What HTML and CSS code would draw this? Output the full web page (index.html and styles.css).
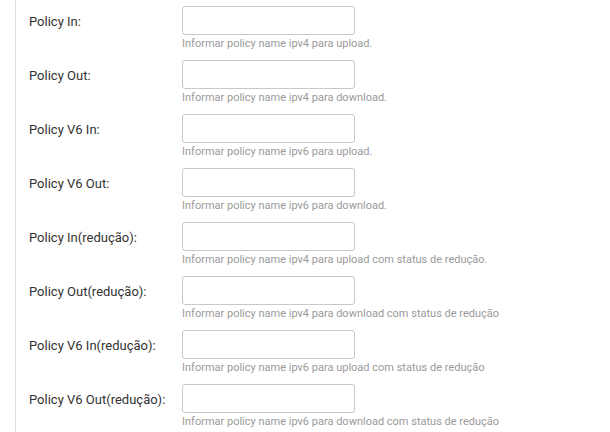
FILE: index.html
```html
<!DOCTYPE html>
<html lang="pt">
<head>
<meta charset="utf-8">
<title>Policies</title>
<link rel="stylesheet" href="styles.css">
</head>
<body>
<div class="panel">
  <div class="row">
    <label class="label">Policy In:</label>
    <div class="field">
      <input class="input" type="text">
      <div class="hint">Informar policy name ipv4 para upload.</div>
    </div>
  </div>
  <div class="row">
    <label class="label">Policy Out:</label>
    <div class="field">
      <input class="input" type="text">
      <div class="hint">Informar policy name ipv4 para download.</div>
    </div>
  </div>
  <div class="row">
    <label class="label">Policy V6 In:</label>
    <div class="field">
      <input class="input" type="text">
      <div class="hint">Informar policy name ipv6 para upload.</div>
    </div>
  </div>
  <div class="row">
    <label class="label">Policy V6 Out:</label>
    <div class="field">
      <input class="input" type="text">
      <div class="hint">Informar policy name ipv6 para download.</div>
    </div>
  </div>
  <div class="row">
    <label class="label">Policy In(redução):</label>
    <div class="field">
      <input class="input" type="text">
      <div class="hint">Informar policy name ipv4 para upload com status de redução.</div>
    </div>
  </div>
  <div class="row">
    <label class="label">Policy Out(redução):</label>
    <div class="field">
      <input class="input" type="text">
      <div class="hint">Informar policy name ipv4 para download com status de redução</div>
    </div>
  </div>
  <div class="row">
    <label class="label">Policy V6 In(redução):</label>
    <div class="field">
      <input class="input" type="text">
      <div class="hint">Informar policy name ipv6 para upload com status de redução</div>
    </div>
  </div>
  <div class="row">
    <label class="label">Policy V6 Out(redução):</label>
    <div class="field">
      <input class="input" type="text">
      <div class="hint">Informar policy name ipv6 para download com status de redução</div>
    </div>
  </div>
</div>
</body>
</html>
```
FILE: styles.css
```css
html, body {
  margin: 0;
  padding: 0;
  background: #ffffff;
  height: 100%;
  overflow: hidden;
}
body {
  font-family: Roboto, "Liberation Sans", sans-serif;
  color: #333333;
}
.panel {
  margin-left: 15px;
  border-left: 1px solid #dddddd;
  min-height: 100%;
  padding: 6px 0 0 13px;
  box-sizing: border-box;
}
.row {
  display: flex;
  align-items: flex-start;
  margin-bottom: 9px;
}
.label {
  width: 153px;
  flex: none;
  font-size: 13px;
  line-height: 16px;
  padding-top: 8px;
  color: #333333;
}
.field {
  display: flex;
  flex-direction: column;
}
.input {
  box-sizing: border-box;
  width: 173px;
  height: 29px;
  margin: 0;
  border: 1px solid #c8c8c8;
  border-radius: 3px;
  background: #ffffff;
  padding: 4px 8px;
  font: inherit;
  outline: none;
}
.hint {
  margin-top: 1px;
  font-size: 11px;
  line-height: 15px;
  color: #9a9a9a;
  white-space: nowrap;
}
```
